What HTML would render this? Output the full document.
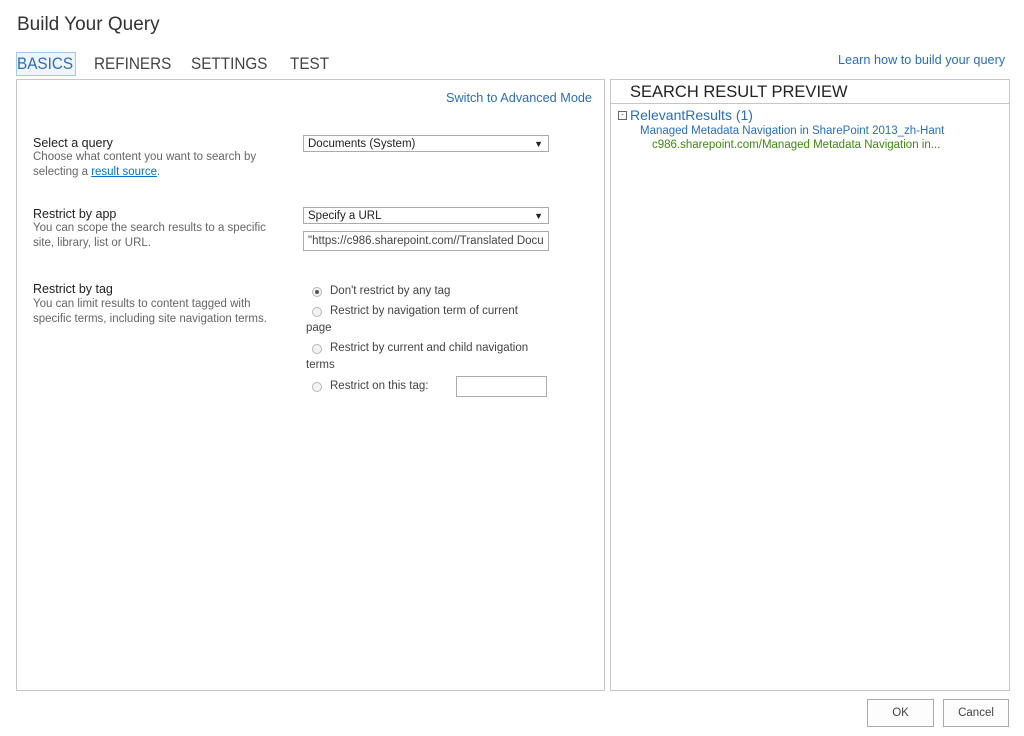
<!DOCTYPE html>
<html><head><style>
body{margin:0;width:1024px;height:736px;background:#fff;font-family:"Liberation Sans",sans-serif;position:relative;overflow:hidden;color:#444}
.a{position:absolute;white-space:nowrap}
.t{font-size:17px;color:#444;transform:scaleX(0.9);transform-origin:0 0}
.lbl{font-size:12.5px;color:#222}
.d{font-size:11.5px;color:#666;line-height:15px}
.sel{position:absolute;border:1px solid #ababab;height:17px;font-size:11.5px;color:#222;line-height:17px;padding-left:4px;box-sizing:border-box;background:#fff}
.sel span{position:absolute;right:5px;top:0;font-size:9px}
.r{position:absolute;width:10px;height:10px;border:1px solid #b8b8b8;border-radius:50%;background:#f3f3f3;box-sizing:border-box}
.rt{font-size:11.5px;color:#444}
.btn{position:absolute;border:1px solid #ababab;height:28px;box-sizing:border-box;font-size:11.5px;color:#444;text-align:center;line-height:26px;background:#fdfdfd}
</style></head><body>
<div class="a" style="left:17px;top:14px;font-size:19px;color:#333">Build Your Query</div>
<div class="a" style="left:16px;top:52px;width:58px;height:22px;border:1px solid #a6c8ef;background:#eef5fd"></div>
<div class="a t" style="left:17px;top:54px;color:#2a6ebb">BASICS</div>
<div class="a t" style="left:94px;top:54px">REFINERS</div>
<div class="a t" style="left:191px;top:54px">SETTINGS</div>
<div class="a t" style="left:290px;top:54px">TEST</div>
<div class="a" style="left:838px;top:53px;font-size:12.7px;color:#2a6ebb">Learn how to build your query</div>

<div class="a" style="left:16px;top:79px;width:587px;height:610px;border:1px solid #c6c6c6"></div>
<div class="a" style="left:610px;top:79px;width:398px;height:610px;border:1px solid #c6c6c6"></div>
<div class="a" style="left:611px;top:103px;width:398px;height:1px;background:#c6c6c6"></div>

<div class="a" style="left:446px;top:91px;font-size:12.7px;color:#2a6ebb">Switch to Advanced Mode</div>

<div class="a lbl" style="left:33px;top:136px">Select a query</div>
<div class="a d" style="left:33px;top:150px">Choose what content you want to search by<br>selecting a <span style="color:#0072c6;text-decoration:underline">result source</span>.</div>
<div class="sel" style="left:303px;top:135px;width:246px">Documents (System)<span>▼</span></div>

<div class="a lbl" style="left:33px;top:207px">Restrict by app</div>
<div class="a d" style="left:33px;top:221px">You can scope the search results to a specific<br>site, library, list or URL.</div>
<div class="sel" style="left:303px;top:207px;width:246px">Specify a URL<span>▼</span></div>
<div class="sel" style="left:303px;top:231px;width:246px;height:20px;line-height:19px;color:#444;overflow:hidden">"https://c986.sharepoint.com//Translated Docu</div>

<div class="a lbl" style="left:33px;top:282px">Restrict by tag</div>
<div class="a d" style="left:33px;top:297px">You can limit results to content tagged with<br>specific terms, including site navigation terms.</div>

<div class="r" style="left:312px;top:287px"><div style="position:absolute;left:2px;top:2px;width:4px;height:4px;border-radius:50%;background:#555"></div></div>
<div class="a rt" style="left:330px;top:285px">Don't restrict by any tag</div>
<div class="r" style="left:312px;top:307px"></div>
<div class="a rt" style="left:330px;top:305px">Restrict by navigation term of current</div>
<div class="a rt" style="left:306px;top:322px">page</div>
<div class="r" style="left:312px;top:344px"></div>
<div class="a rt" style="left:330px;top:342px">Restrict by current and child navigation</div>
<div class="a rt" style="left:306px;top:359px">terms</div>
<div class="r" style="left:312px;top:382px"></div>
<div class="a rt" style="left:330px;top:380px">Restrict on this tag:</div>
<div class="a" style="left:456px;top:376px;width:89px;height:19px;border:1px solid #ababab"></div>

<div class="a" style="left:630px;top:83px;font-size:16.5px;color:#222">SEARCH RESULT PREVIEW</div>
<div class="a" style="left:618px;top:111px;width:7px;height:7px;border:1px solid #666;font-size:8px;line-height:6px;text-align:center;color:#333">-</div>
<div class="a" style="left:630px;top:107px;font-size:14px;color:#2a6ebb">RelevantResults (1)</div>
<div class="a" style="left:640px;top:125px;font-size:11.5px;color:#2a6ebb">Managed Metadata Navigation in SharePoint 2013_zh-Hant</div>
<div class="a" style="left:652px;top:139px;font-size:11.5px;color:#3c8a10">c986.sharepoint.com/Managed Metadata Navigation in...</div>

<div class="btn" style="left:867px;top:699px;width:67px">OK</div>
<div class="btn" style="left:943px;top:699px;width:66px">Cancel</div>
</body></html>
